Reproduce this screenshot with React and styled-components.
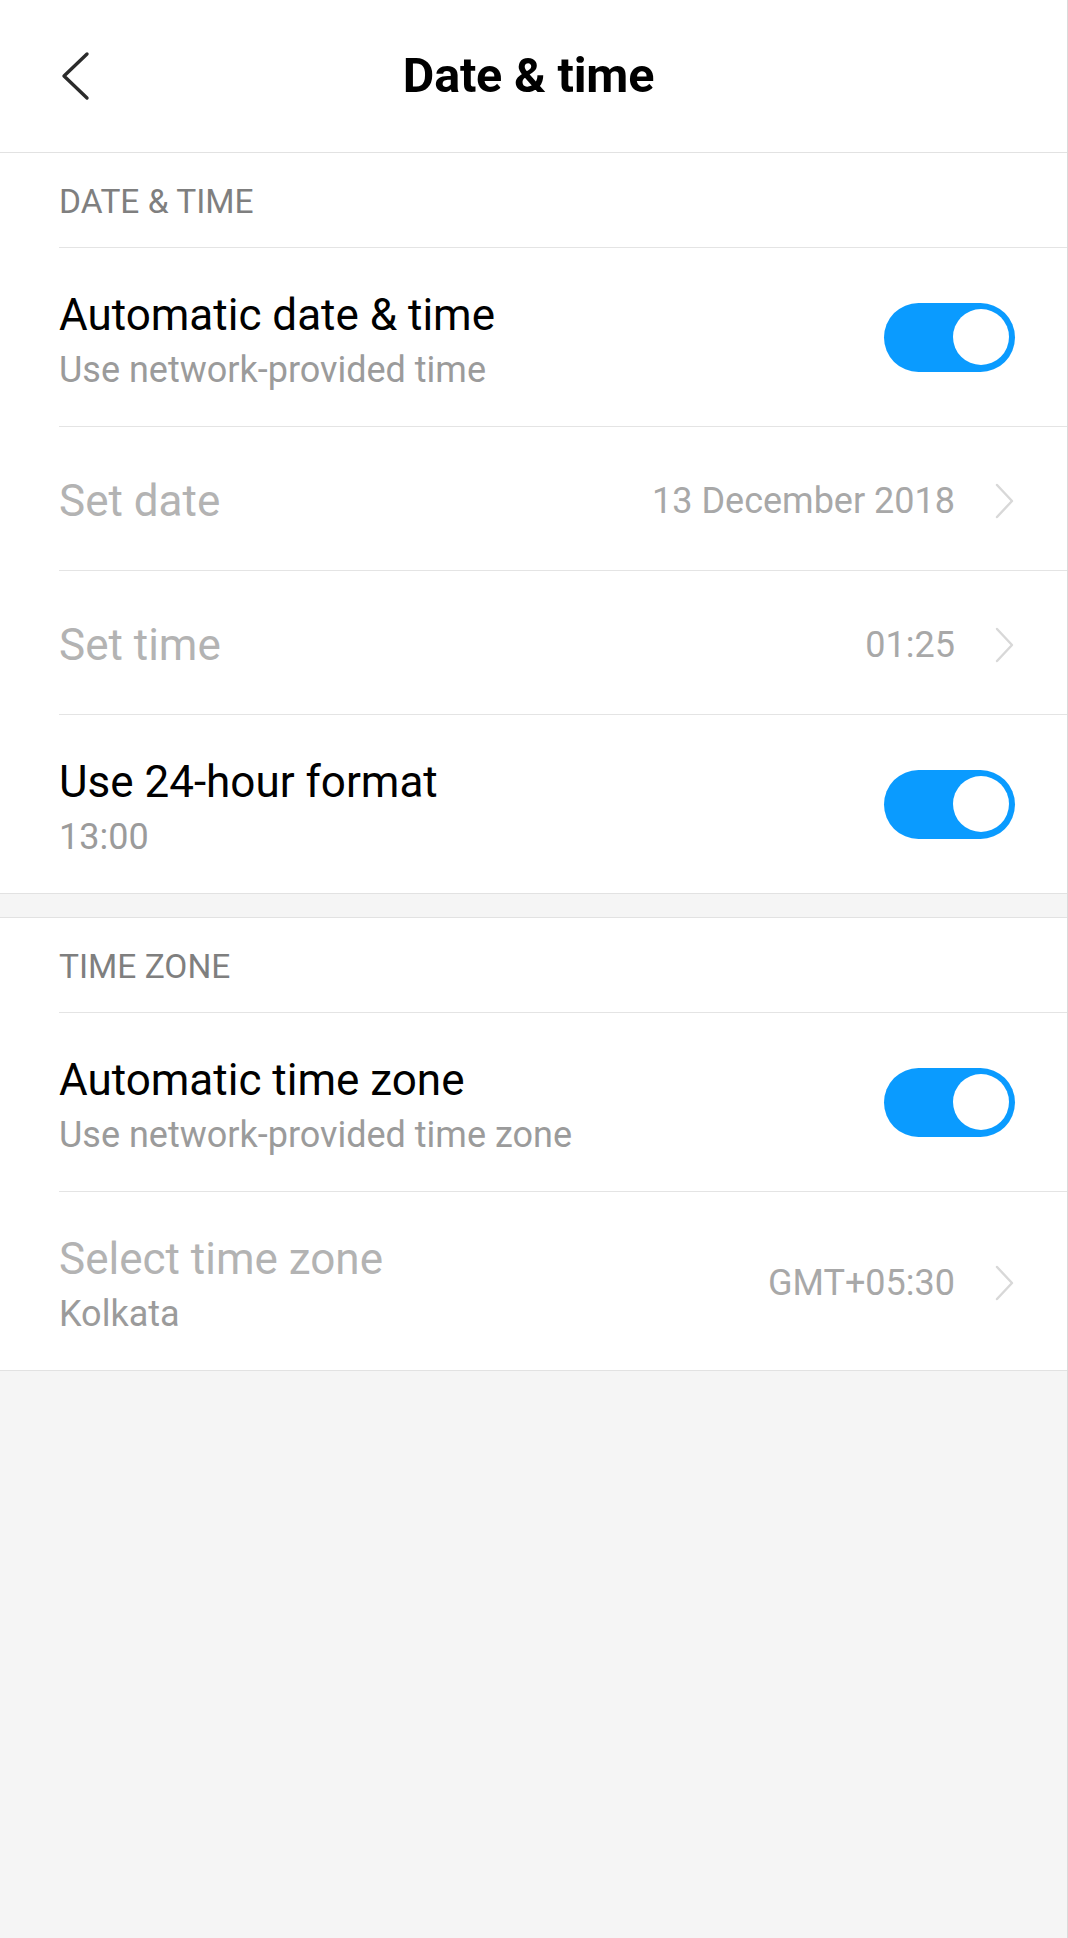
import React from "react";
import styled, { createGlobalStyle } from "styled-components";

const GlobalStyle = createGlobalStyle`
  html, body {
    margin: 0;
    padding: 0;
    background: #f5f5f5;
  }
  body {
    font-family: Roboto, "Noto Sans", "Liberation Sans", sans-serif;
    -webkit-font-smoothing: antialiased;
  }
  * { box-sizing: border-box; }
`;

const Page = styled.div`
  min-height: 1938px;
  background: #f5f5f5;
  border-right: 1px solid #dadada;
`;

const Header = styled.header`
  height: 153px;
  background: #ffffff;
  border-bottom: 1px solid #e2e2e2;
  display: grid;
  grid-template-columns: 1fr auto 1fr;
  align-items: center;
`;

const BackButton = styled.button`
  justify-self: start;
  margin-left: 61px;
  padding: 0;
  border: 0;
  background: none;
  display: flex;
  align-items: center;
  cursor: pointer;
`;

const Title = styled.h1`
  margin: 0 10px 0 0;
  font-size: 48.5px;
  font-weight: 700;
  color: #000;
  line-height: 1;
  letter-spacing: -0.2px;
`;

const Section = styled.section`
  background: #ffffff;
  border-bottom: 1px solid #e2e2e2;
  border-top: ${(p) => (p.$first ? "0" : "1px solid #e2e2e2")};
  margin-top: ${(p) => (p.$first ? "0" : "23px")};
`;

const SectionTitle = styled.div`
  height: 94px;
  padding-left: 59px;
  display: flex;
  align-items: center;
  font-size: 33.5px;
  color: #7f7f7f;
  text-transform: uppercase;
  padding-top: 2px;
`;

const Row = styled.div`
  margin-left: 59px;
  padding-right: 52px;
  min-height: ${(p) => (p.$tall ? "179px" : "144px")};
  border-top: 1px solid #e4e4e4;
  display: flex;
  align-items: center;
  justify-content: space-between;
  gap: 24px;
`;

const TextBlock = styled.div`
  display: flex;
  flex-direction: column;
  gap: 8px;
  padding-top: ${(p) => (p.$tall ? "5px" : "4px")};
`;

const RowTitle = styled.div`
  font-size: 44px;
  line-height: 52px;
  color: ${(p) => (p.$disabled ? "#b3b3b3" : "#000000")};
`;

const RowSub = styled.div`
  font-size: 36px;
  line-height: 42px;
  color: #9b9b9b;
`;

const Trailing = styled.div`
  display: flex;
  align-items: center;
  gap: 40px;
  padding-top: 4px;
`;

const Value = styled.span`
  font-size: 36px;
  line-height: 42px;
  color: #a8a8a8;
`;

const Toggle = styled.div`
  width: 131px;
  height: 69px;
  border-radius: 35px;
  background: ${(p) => (p.$on ? "#0a9bff" : "#d9d9d9")};
  display: flex;
  align-items: center;
  justify-content: ${(p) => (p.$on ? "flex-end" : "flex-start")};
  padding: 0 6px;
  flex-shrink: 0;
`;

const Knob = styled.div`
  width: 56px;
  height: 56px;
  border-radius: 50%;
  background: #ffffff;
`;

const BackIcon = () => (
  <svg width="30" height="50" viewBox="0 0 30 50" aria-hidden="true">
    <polyline
      points="26,3 3,25 26,47"
      fill="none"
      stroke="#2b2b2b"
      strokeWidth="3.4"
      strokeLinecap="round"
      strokeLinejoin="round"
    />
  </svg>
);

const Chevron = () => (
  <svg width="20" height="36" viewBox="0 0 20 36" aria-hidden="true">
    <polyline
      points="2,2 17,18 2,34"
      fill="none"
      stroke="#d8d8d8"
      strokeWidth="2.4"
      strokeLinecap="round"
      strokeLinejoin="round"
    />
  </svg>
);

const SwitchRow = ({ title, sub }) => (
  <Row $tall={!!sub}>
    <TextBlock $tall={!!sub}>
      <RowTitle>{title}</RowTitle>
      {sub && <RowSub>{sub}</RowSub>}
    </TextBlock>
    <Toggle $on>
      <Knob />
    </Toggle>
  </Row>
);

const LinkRow = ({ title, sub, value }) => (
  <Row $tall={!!sub}>
    <TextBlock $tall={!!sub}>
      <RowTitle $disabled>{title}</RowTitle>
      {sub && <RowSub>{sub}</RowSub>}
    </TextBlock>
    <Trailing>
      <Value>{value}</Value>
      <Chevron />
    </Trailing>
  </Row>
);

export default function App() {
  return (
    <>
      <GlobalStyle />
      <Page>
        <Header>
          <BackButton aria-label="Back">
            <BackIcon />
          </BackButton>
          <Title>Date &amp; time</Title>
          <div />
        </Header>

        <Section $first>
          <SectionTitle>Date &amp; time</SectionTitle>
          <SwitchRow title="Automatic date & time" sub="Use network-provided time" />
          <LinkRow title="Set date" value="13 December 2018" />
          <LinkRow title="Set time" value="01:25" />
          <SwitchRow title="Use 24-hour format" sub="13:00" />
        </Section>

        <Section>
          <SectionTitle>Time zone</SectionTitle>
          <SwitchRow title="Automatic time zone" sub="Use network-provided time zone" />
          <LinkRow title="Select time zone" sub="Kolkata" value="GMT+05:30" />
        </Section>
      </Page>
    </>
  );
}
